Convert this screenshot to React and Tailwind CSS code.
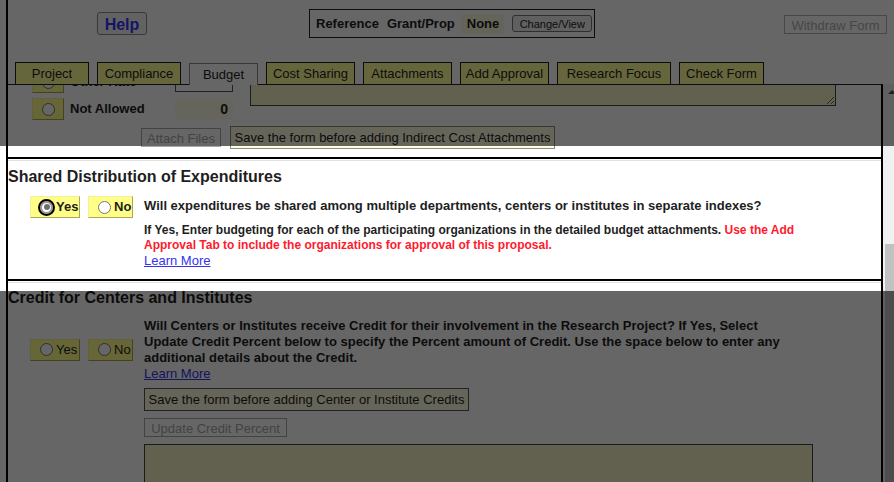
import React from "react";

const tabs = [
  { label: "Project", w: "w-[74px]" },
  { label: "Compliance", w: "w-[84px]" },
  { label: "Budget", w: "w-[69px]", active: true },
  { label: "Cost Sharing", w: "w-[89px]" },
  { label: "Attachments", w: "w-[89px]" },
  { label: "Add Approval", w: "w-[89px]" },
  { label: "Research Focus", w: "w-[114px]" },
  { label: "Check Form", w: "w-[85px]" },
];

function Radio({ checked }) {
  if (checked) {
    return (
      <span className="ml-[9px] mr-[3px] flex h-[13px] w-[13px] shrink-0 items-center justify-center rounded-full border-2 border-[#9a9a9a] bg-white outline-2 outline-offset-[0.5px] outline-black">
        <span className="h-[6px] w-[6px] rounded-full bg-[#6e6e6e]" />
      </span>
    );
  }
  return (
    <span className="ml-[9px] mr-[3px] h-[13px] w-[13px] shrink-0 rounded-full border border-[#767676] bg-white" />
  );
}

function YesNo({ yes, bold }) {
  const txt = bold ? "font-bold" : "";
  return (
    <div className="flex shrink-0 gap-2">
      <label className={`flex h-[22px] w-[50px] items-center border border-[#f0f0a0] border-b-[#a8a858] border-r-[#a8a858] bg-[#ffff88] text-[13px] ${txt}`}>
        <Radio checked={yes} />
        <span>Yes</span>
      </label>
      <label className={`flex h-[22px] w-[45px] items-center border border-[#f0f0a0] border-b-[#a8a858] border-r-[#a8a858] bg-[#ffff88] text-[13px] ${txt}`}>
        <Radio />
        <span>No</span>
      </label>
    </div>
  );
}

function Divider() {
  return (
    <div>
      <div className="border-t-2 border-black" />
      <div className="mt-px border-t border-[#e2e2e2]" />
    </div>
  );
}

export default function App() {
  return (
    <div className="relative h-[482px] w-[894px] overflow-hidden bg-white font-['Liberation_Sans',Arial,sans-serif] text-[#1e1e1e]">
      <div className="ml-[6px] flex h-[482px] flex-col border-l-2 border-black">
        {/* header */}
        <div className="flex h-[62px] shrink-0 items-start pt-[9px]">
          <button className="ml-[89px] mt-[3px] h-[23px] w-[50px] rounded-[3px] border border-[#8c8c8c] bg-[#f4f4f4] text-[16px] font-bold text-[#3535ff]">
            Help
          </button>
          <div className="ml-[162px] flex h-[29px] w-[286px] items-center border border-[#222] pl-[6px] text-[13px] font-bold">
            <span>Reference</span>
            <span className="ml-[8px]">Grant/Prop</span>
            <span className="ml-[7px] flex h-[20px] items-center bg-[#fbfbdc] px-[5px]">None</span>
            <button className="ml-[8px] h-[17px] w-[80px] rounded-[3px] border border-[#767676] bg-[#efefef] text-[11px] font-normal">
              Change/View
            </button>
          </div>
          <button className="ml-[189px] mt-[6px] h-[19px] w-[103px] border border-[#b4b4b4] bg-white text-[13px] text-[#b0b0b0]">
            Withdraw Form
          </button>
        </div>

        {/* tabs */}
        <div className="relative z-10 -mb-px flex h-[23px] shrink-0 items-start gap-2 pl-[7px]">
          {tabs.map(t =>
            t.active ? (
              <div
                key={t.label}
                className={`${t.w} mt-px flex h-[22px] items-center justify-center border border-b-0 border-[#8a8a8a] bg-white text-[13px]`}
              >
                {t.label}
              </div>
            ) : (
              <div
                key={t.label}
                className={`${t.w} flex h-[22px] items-center justify-center border border-b-0 border-[#222] bg-[#ffff99] text-[13px]`}
              >
                {t.label}
              </div>
            )
          )}
        </div>

        <div className="flex min-h-0 flex-1">
          {/* panel */}
          <div className="w-[875px] shrink-0 overflow-hidden border-r-2 border-t border-black border-t-[#222]">
            <div className="-mt-[14px]">
              {/* indirect cost tail */}
              <div className="flex items-start">
                <div className="flex flex-col gap-[5px] pl-[24px]">
                  <div className="flex items-center">
                    <div className="flex h-[22px] w-[32px] items-center border border-[#f0f0a0] border-b-[#a8a858] border-r-[#a8a858] bg-[#ffff88]">
                      <Radio />
                    </div>
                    <span className="ml-[6px] w-[105px] text-[13px] font-bold">Other Rate</span>
                    <div className="h-[20px] w-[58px] border border-[#555] bg-white" />
                  </div>
                  <div className="flex items-center">
                    <div className="flex h-[22px] w-[32px] items-center border border-[#f0f0a0] border-b-[#a8a858] border-r-[#a8a858] bg-[#ffff88]">
                      <Radio />
                    </div>
                    <span className="ml-[6px] w-[105px] text-[13px] font-bold">Not Allowed</span>
                    <div className="flex h-[20px] w-[58px] items-center justify-end bg-[#fcfce6] pr-[5px] text-[14px] font-bold">
                      0
                    </div>
                  </div>
                </div>
                <textarea
                  readOnly
                  className="ml-[17px] h-[35px] w-[586px] border border-[#444] bg-[#f5f1c2] outline-none"
                />
              </div>
              <div className="mt-[6px] flex items-center pl-[133px]">
                <button className="h-[19px] w-[80px] border border-[#a8a8a8] bg-white text-[13px] text-[#a8a8a8]">
                  Attach Files
                </button>
                <button className="ml-[9px] h-[23px] w-[325px] border border-[#8e8e78] bg-[#fffde2] text-[13px]">
                  Save the form before adding Indirect Cost Attachments
                </button>
              </div>

              <div className="mt-[8px]">
                <Divider />
              </div>

              {/* shared distribution */}
              <h2 className="mt-[7px] text-[16px] font-bold leading-[18px]">
                Shared Distribution of Expenditures
              </h2>
              <div className="mt-[10px] flex items-start pl-[22px]">
                <YesNo yes bold />
                <div className="ml-[11px] w-[664px]">
                  <p className="mt-[2px] text-[13px] font-bold leading-[16px]">
                    Will expenditures be shared among multiple departments, centers or institutes in separate indexes?
                  </p>
                  <p className="mt-[9px] text-[12px] font-bold leading-[15px]">
                    If Yes, Enter budgeting for each of the participating organizations in the detailed budget attachments.{" "}
                    <span className="text-[#ff1a2e]">
                      Use the Add Approval Tab to include the organizations for approval of this proposal.
                    </span>
                  </p>
                  <a href="#" className="block text-[13px] leading-[15px] text-[#3333ee] underline">
                    Learn More
                  </a>
                </div>
              </div>

              <div className="mt-[11px]">
                <Divider />
              </div>

              {/* credit */}
              <h2 className="mt-[6px] text-[16px] font-bold leading-[18px]">
                Credit for Centers and Institutes
              </h2>
              <div className="mt-[11px] flex items-center pl-[22px]">
                <YesNo />
                <div className="ml-[11px] w-[648px]">
                  <p className="text-[13px] font-bold leading-[16px]">
                    Will Centers or Institutes receive Credit for their involvement in the Research Project? If Yes, Select Update Credit Percent below to specify the Percent amount of Credit. Use the space below to enter any additional details about the Credit.
                  </p>
                  <a href="#" className="block text-[13px] leading-[15px] text-[#3333ee] underline">
                    Learn More
                  </a>
                </div>
              </div>
              <div className="flex flex-col items-start gap-[7px] pl-[136px] pt-[7px]">
                <button className="h-[23px] w-[325px] border border-[#555] bg-[#fffde2] text-[13px]">
                  Save the form before adding Center or Institute Credits
                </button>
                <button className="h-[19px] w-[143px] border border-[#a8a8a8] bg-white text-[13px] text-[#a8a8a8]">
                  Update Credit Percent
                </button>
                <textarea
                  readOnly
                  className="h-[90px] w-[669px] border border-[#444] bg-[#f5f1c2] outline-none"
                />
              </div>
            </div>
          </div>

          {/* scrollbar */}
          <div className="flex w-[17px] shrink-0 flex-col bg-[#f1f1f1]">
            <div className="flex h-[17px] shrink-0 items-start justify-center pt-[6px]">
              <span className="h-0 w-0 border-x-4 border-b-4 border-x-transparent border-b-[#505050]" />
            </div>
            <div className="h-[143px] shrink-0" />
            <div className="ml-[2px] mr-[2px] flex-1 bg-[#c1c1c1]" />
          </div>
        </div>
      </div>

      {/* spotlight overlay */}
      <div className="absolute left-0 right-0 top-0 z-30 h-[146px] bg-black/60" />
      <div className="absolute bottom-0 left-0 right-0 top-[291px] z-30 bg-black/60" />
    </div>
  );
}
